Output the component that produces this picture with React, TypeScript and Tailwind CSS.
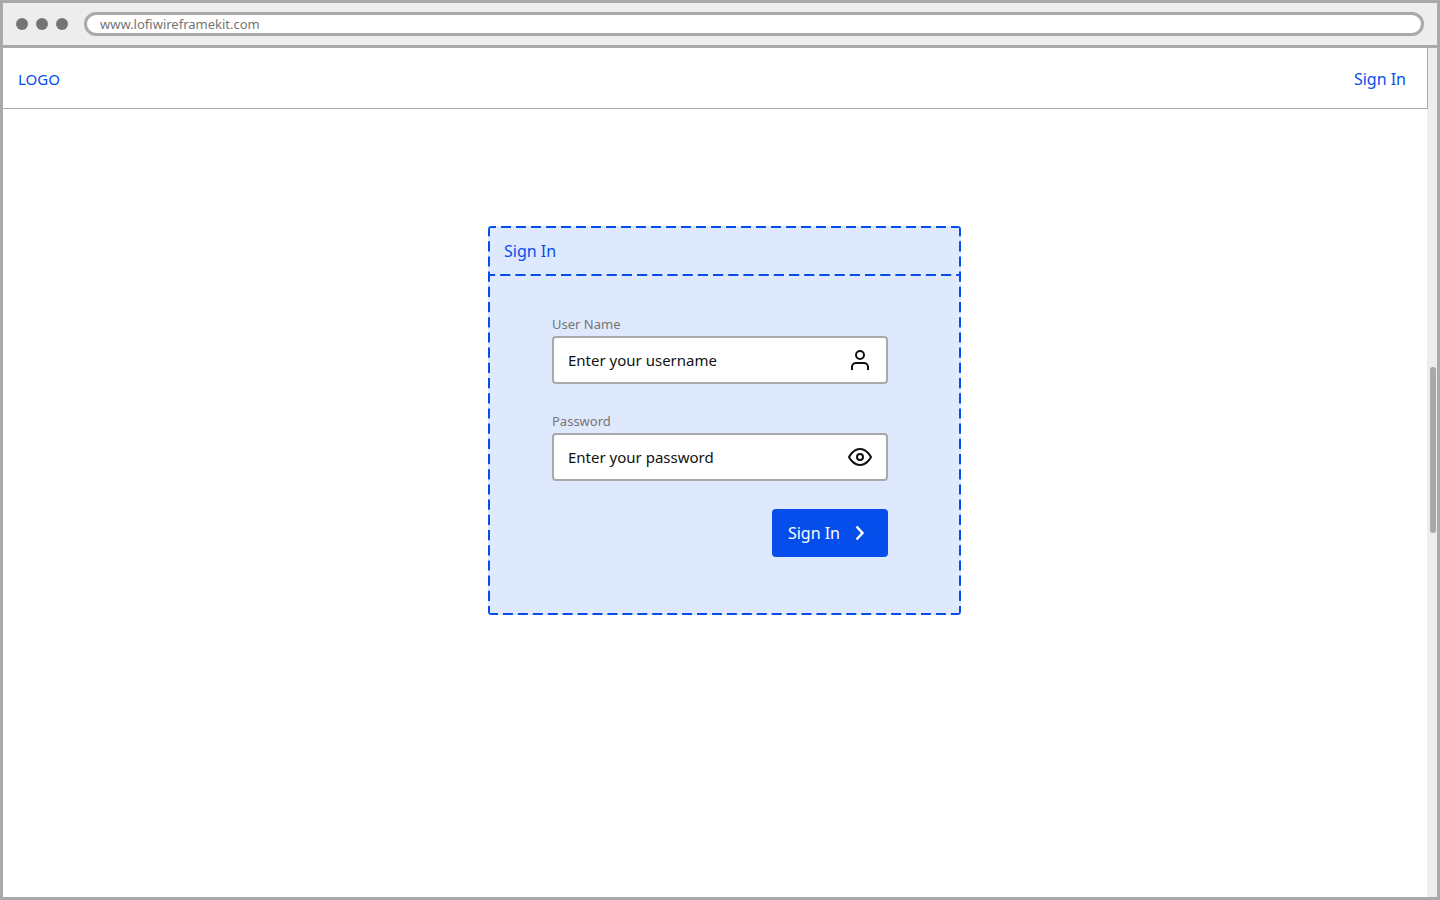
import React from 'react';

interface DashedLineProps {
    x1?: string;
    y1?: string;
    x2?: string;
    y2?: string;
    dash?: string;
    offset?: number;
}

const DashedLine: React.FC<DashedLineProps> = ({ x1 = '0', y1 = '0', x2 = '0', y2 = '0', dash = '10.2 5', offset = 0 }) => (
    <line x1={x1} y1={y1} x2={x2} y2={y2} strokeDasharray={dash} strokeDashoffset={offset} />
);

const CardOutline: React.FC = () => (
    <svg className="pointer-events-none absolute inset-0 h-full w-full rounded-sm stroke-[#054eeb] stroke-[4]" aria-hidden="true">
        <DashedLine x2="100%" dash="10 5" offset={2} />
        <DashedLine y1="100%" x2="100%" y2="100%" dash="10 4.93" />
        <DashedLine y2="100%" />
        <DashedLine x1="100%" x2="100%" y2="100%" />
    </svg>
);

const UserIcon: React.FC = () => (
    <svg width="24" height="24" viewBox="0 0 24 24" fill="none" stroke="currentColor" strokeWidth="2" aria-hidden="true">
        <circle cx="12" cy="7" r="4" />
        <path d="M4 22v-3a4 4 0 0 1 4-4h8a4 4 0 0 1 4 4v3" />
    </svg>
);

const EyeIcon: React.FC = () => (
    <svg width="24" height="24" viewBox="0 0 24 24" fill="none" stroke="currentColor" strokeWidth="2" strokeLinejoin="round" aria-hidden="true">
        <path d="M1 12s4-8 11-8 11 8 11 8-4 8-11 8S1 12 1 12z" />
        <circle cx="12" cy="12" r="3" />
    </svg>
);

const ChevronIcon: React.FC = () => (
    <svg width="24" height="24" viewBox="0 0 24 24" fill="none" stroke="currentColor" strokeWidth="2.5" aria-hidden="true">
        <path d="M8.5 5.5l6 6.5-6 6.5" />
    </svg>
);

interface FieldProps {
    id: string;
    label: string;
    type: string;
    placeholder: string;
    icon: React.ReactNode;
}

const Field: React.FC<FieldProps> = ({ id, label, type, placeholder, icon }) => (
    <div className="flex flex-col">
        <label htmlFor={id} className="pb-0.5 text-[13px] leading-[19px] text-[#757575]">{label}</label>
        <div className="flex h-12 items-center rounded-sm border-2 border-[#a9a9a9] bg-white px-3.5 text-[#111111]">
            <input
                id={id}
                type={type}
                placeholder={placeholder}
                className="h-full min-w-0 flex-1 bg-transparent text-[15px] outline-none placeholder:text-[#111111]"
            />
            {icon}
        </div>
    </div>
);

const BrowserBar: React.FC = () => (
    <div className="flex items-center gap-4 border-b-[3px] border-[#a9a9a9] bg-[#ededed] px-[13px] py-[9px]">
        <div className="flex gap-2">
            <span className="h-3 w-3 rounded-full bg-[#757575]" />
            <span className="h-3 w-3 rounded-full bg-[#757575]" />
            <span className="h-3 w-3 rounded-full bg-[#757575]" />
        </div>
        <input
            type="text"
            aria-label="Address"
            defaultValue="www.lofiwireframekit.com"
            className="h-6 min-w-0 flex-1 rounded-full border-[3px] border-[#a9a9a9] bg-white px-[13px] text-[13px] text-[#757575] outline-none"
        />
    </div>
);

const SignInCard: React.FC = () => (
    <section className="relative w-full max-w-[473px] rounded-sm bg-[#dfe9fe]">
        <CardOutline />
        <h2 className="px-4 pt-[13px] pb-[11px] text-base text-[#054eeb]">Sign In</h2>
        <svg className="block h-0.5 w-full stroke-[#054eeb] stroke-[4]" aria-hidden="true">
            <DashedLine x2="100%" offset={3} />
        </svg>
        <form className="flex flex-col gap-7 pt-[39px] pr-[73px] pb-[58px] pl-16" onSubmit={(e) => e.preventDefault()}>
            <Field id="username" label="User Name" type="text" placeholder="Enter your username" icon={<UserIcon />} />
            <Field id="password" label="Password" type="password" placeholder="Enter your password" icon={<EyeIcon />} />
            <button type="submit" className="flex h-12 items-center gap-2 self-end rounded-sm bg-[#054eeb] px-4 text-base text-white">
                Sign In
                <ChevronIcon />
            </button>
        </form>
    </section>
);

const App: React.FC = () => {
    return (
        <div className="flex min-h-screen flex-col border-[3px] border-[#a9a9a9] bg-white font-['Noto_Sans',sans-serif]">
            <BrowserBar />
            <div className="flex flex-1">
                <div className="flex min-w-0 flex-1 flex-col">
                    <header className="relative -mr-px flex items-center justify-between border-r border-b border-[#a9a9a9] bg-white pt-[19px] pr-[21px] pb-[17px] pl-[15px] text-base text-[#054eeb]">
                        <a href="#" className="text-[15px]">LOGO</a>
                        <a href="#">Sign In</a>
                    </header>
                    <main className="flex justify-center pt-[117px] pl-[19px]">
                        <SignInCard />
                    </main>
                </div>
                <div className="w-2.5 bg-[#ededed] pr-px pl-[3px]">
                    <div className="mt-[319px] h-[166px] rounded-full bg-[#a9a9a9]" />
                </div>
            </div>
        </div>
    );
};

export default App;
